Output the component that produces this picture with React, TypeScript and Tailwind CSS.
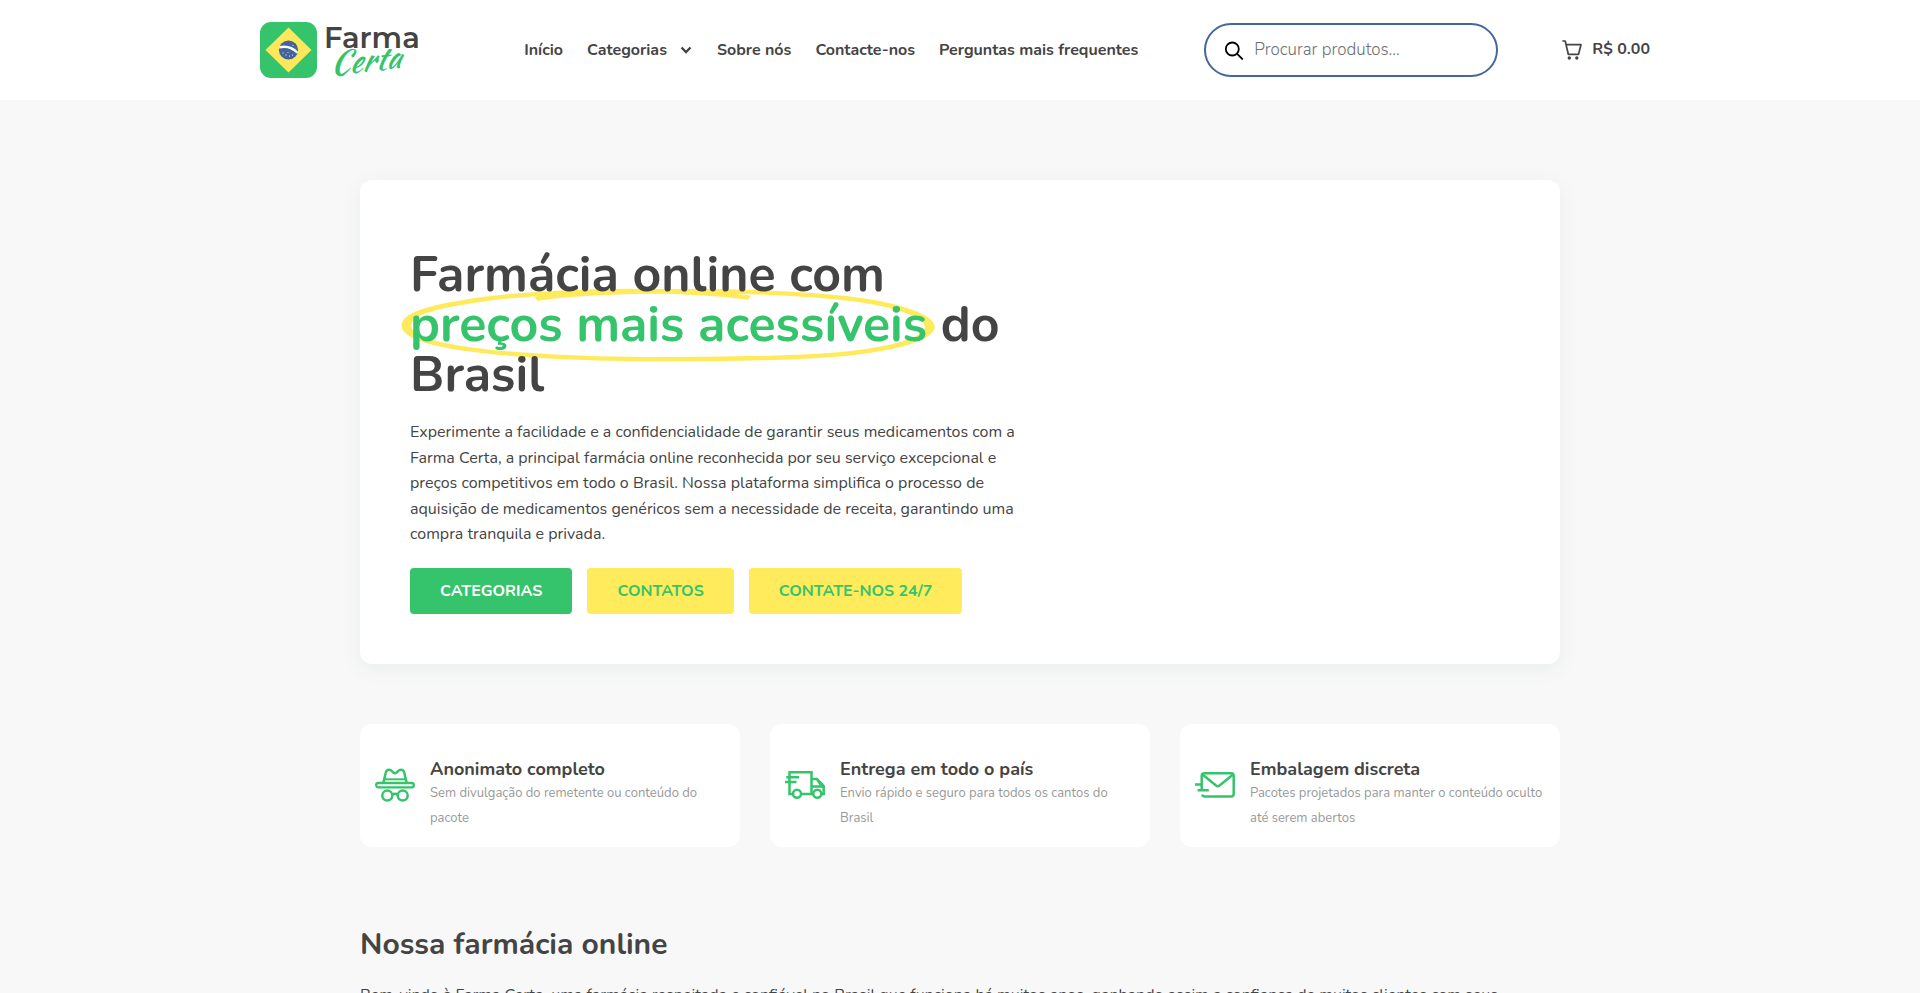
import type { ReactNode } from "react";

function Logo() {
  return (
    <svg viewBox="0 0 160 58" className="h-[58px] w-40 overflow-visible" role="img" aria-label="Farma Certa">
      <rect x="0" y="1" width="57" height="56" rx="11" fill="#35c46b" />
      <path d="M28.500 6.500 51.500 29 28.500 51.500 5.500 29Z" fill="#fde75a" />
      <circle cx="28.500" cy="29" r="9.600" fill="#42659b" />
      <path d="M19.300 26.300c6.500-1.500 13.500.6 18.300 5.400" fill="none" stroke="#fff" strokeWidth="2.300" />
      <g fill="#fff">
        <circle cx="23" cy="32" r=".6" />
        <circle cx="26" cy="34" r=".6" />
        <circle cx="29.500" cy="35" r=".6" />
        <circle cx="32.500" cy="34" r=".6" />
        <circle cx="28" cy="31.500" r=".5" />
        <circle cx="33" cy="24.500" r=".5" />
      </g>
      <text x="64" y="27" fontSize="29" fontWeight="600" fill="#444" className="font-['Montserrat','Nunito','Open_Sans',sans-serif]">
        Farma
      </text>
      <text
        x="70"
        y="54"
        fontSize="32"
        fontStyle="italic"
        fill="#35c46b"
        transform="rotate(-6 70 54)"
        className="font-['Yellowtail','Kaushan_Script','Pacifico','Dancing_Script',cursive]"
      >
        Certa
      </text>
    </svg>
  );
}

function NavLink({ children }: { children: ReactNode }) {
  return (
    <a href="#" className="flex items-center whitespace-nowrap">
      {children}
    </a>
  );
}

function Header() {
  return (
    <header className="bg-white">
      <div className="mx-auto flex h-[100px] max-w-[1400px] items-center justify-between pr-2.5">
        <a href="#">
          <Logo />
        </a>
        <div className="flex items-center gap-16">
          <nav className="flex items-center gap-6 pr-0.5 text-base font-bold">
            <NavLink>Início</NavLink>
            <NavLink>
              Categorias
              <svg viewBox="0 0 12 12" className="ml-3 h-3 w-3.5" fill="none" stroke="#444" strokeWidth="2.400">
                <path d="m1.500 3.500 4.500 4.500 4.500-4.500" />
              </svg>
            </NavLink>
            <NavLink>Sobre nós</NavLink>
            <NavLink>Contacte-nos</NavLink>
            <NavLink>Perguntas mais frequentes</NavLink>
          </nav>
          <label className="flex h-[54px] w-[294px] items-center gap-2.5 rounded-full border-2 border-[#44679f] pr-5 pl-[18px]">
            <svg viewBox="0 0 20 20" className="size-5 shrink-0" fill="none" stroke="#000" strokeWidth="1.800">
              <circle cx="8.300" cy="9" r="6.500" />
              <path d="m13.100 13.800 5.700 5.700" />
            </svg>
            <input
              type="search"
              aria-label="Procurar produtos"
              placeholder="Procurar produtos..."
              className="w-full min-w-0 bg-transparent text-[17px] font-light outline-none placeholder:text-[#707070]"
            />
          </label>
          <a href="#" className="flex items-center gap-2.5 text-base font-bold whitespace-nowrap">
            <svg viewBox="0 0 20 20" className="size-5" fill="none" stroke="#444" strokeWidth="1.700">
              <path d="M.300 1H3.200L6.300 14.300H16.500L19 4.700H4.100" strokeLinejoin="round" />
              <circle cx="7.300" cy="18" r="1.700" fill="#444" stroke="none" />
              <circle cx="14.800" cy="18" r="1.700" fill="#444" stroke="none" />
            </svg>
            <span className="pb-0.5">R$ 0.00</span>
          </a>
        </div>
      </div>
    </header>
  );
}

function Hero() {
  return (
    <section className="rounded-xl bg-white px-[50px] pt-[70px] pb-[50px] shadow-[0_4px_20px_rgba(60,110,90,0.08)]">
      <div className="max-w-[620px]">
        <h1 className="isolate text-[50px] leading-[50px] font-bold">
          Farmácia online com{" "}
          <span className="relative inline-block whitespace-nowrap text-[#35c46b]">
            preços mais acessíveis
            <svg
              viewBox="0 0 500 150"
              preserveAspectRatio="none"
              className="absolute top-1/2 left-1/2 -z-10 h-[calc(100%+22px)] w-[calc(100%+20px)] -translate-x-1/2 -translate-y-1/2 overflow-visible"
              fill="none"
              stroke="#ffea5c"
              strokeWidth="9"
            >
              <path d="M325,18C228.7-8.3,118.5,8.3,78,21C22.4,38.4,4.6,54.6,5.6,77.6c1.4,32.4,52.2,54,142.6,63.7 c66.2,7.1,212.2,7.5,273.5-8.3c64.4-16.6,104.3-57.6,33.8-98.2C386.7-4.9,179.4-1.4,126.3,20.7" />
            </svg>
          </span>{" "}
          do Brasil
        </h1>
        <p className="mt-5 text-base leading-[1.6]">
          Experimente a facilidade e a confidencialidade de garantir seus medicamentos com a Farma Certa, a principal
          farmácia online reconhecida por seu serviço excepcional e preços competitivos em todo o Brasil. Nossa
          plataforma simplifica o processo de aquisição de medicamentos genéricos sem a necessidade de receita,
          garantindo uma compra tranquila e privada.
        </p>
        <div className="mt-5 flex flex-wrap gap-[15px] text-base font-bold uppercase">
          <button className="h-[46px] rounded bg-[#35c46b] px-[30px] text-white uppercase">Categorias</button>
          <button className="h-[46px] rounded bg-[#ffeb5c] px-[30px] text-[#35c46b] uppercase">Contatos</button>
          <button className="h-[46px] rounded bg-[#ffeb5c] px-[30px] text-[#35c46b] uppercase">Contate-nos 24/7</button>
        </div>
      </div>
    </section>
  );
}

function IconFrame({ children }: { children: ReactNode }) {
  return (
    <svg viewBox="0 0 40 40" className="size-10 shrink-0" fill="none" stroke="#35c46b" strokeWidth="2.500">
      {children}
    </svg>
  );
}

const features = [
  {
    title: "Anonimato completo",
    text: "Sem divulgação do remetente ou conteúdo do pacote",
    icon: (
      <IconFrame>
        <path d="M8.300 18 10.800 7.500C11.500 4.800 13.600 4 15.800 5.200L18.300 7.500Q20 8.700 21.700 7.500L24.200 5.200C26.400 4 28.500 4.800 29.200 7.500L31.700 18" />
        <path d="M9.300 14.300H30.700" strokeWidth="2" />
        <rect x="1.200" y="18" width="37.600" height="4.300" rx="2.100" strokeWidth="2.300" />
        <circle cx="12.300" cy="30.600" r="5" />
        <circle cx="27.700" cy="30.600" r="5" />
        <path d="M17 29.600Q20 27.900 23 29.600" />
      </IconFrame>
    ),
  },
  {
    title: "Entrega em todo o país",
    text: "Envio rápido e seguro para todos os cantos do Brasil",
    icon: (
      <IconFrame>
        <path d="M4.500 12V7.300H26.500V29H16M4.500 12V29H8" />
        <path d="M1.300 12.300H14M0 17H11.500" />
        <path d="M26.500 14H32L38.700 21V29H36.500M26.500 29H28.500M26.500 21.500H38.700" />
        <path d="M31.500 14 35.500 20.500" strokeWidth="1.500" />
        <circle cx="12" cy="28.700" r="4" />
        <circle cx="32.300" cy="28.700" r="4" />
      </IconFrame>
    ),
  },
  {
    title: "Embalagem discreta",
    text: "Pacotes projetados para manter o conteúdo oculto até serem abertos",
    icon: (
      <IconFrame>
        <path d="M6.700 24.500V11Q6.700 8.200 9.500 8.200H36Q38.700 8.200 38.700 11V28.700Q38.700 31.500 36 31.500H9.500Q7.700 31.500 7.100 29.500" />
        <path d="M7.500 9.500 21 20.500Q22.800 21.900 24.600 20.500L38 9.500" />
        <path d="M0 19.400H6.500M2.600 25.200H13.800" />
      </IconFrame>
    ),
  },
];

function Features() {
  return (
    <section className="mt-[60px] grid grid-cols-3 gap-[30px]">
      {features.map((f) => (
        <article key={f.title} className="flex items-center gap-[15px] rounded-xl bg-white px-[15px] pt-[33px] pb-4">
          <div className="pb-[18px]">{f.icon}</div>
          <div>
            <h3 className="text-lg leading-6 font-bold">{f.title}</h3>
            <p className="text-[13px] leading-[25px] text-[#999]">{f.text}</p>
          </div>
        </article>
      ))}
    </section>
  );
}

export default function App() {
  return (
    <div className="min-h-screen bg-[#f8f8f8] font-['Nunito','Open_Sans',sans-serif] text-[#444]">
      <Header />
      <main className="mx-auto max-w-[1200px] pt-20">
        <Hero />
        <Features />
        <section className="mt-20">
          <h2 className="text-3xl leading-9 font-bold">Nossa farmácia online</h2>
          <p className="mt-5 text-base leading-[1.6]">
            Bem-vindo à Farma Certa, uma farmácia respeitada e confiável no Brasil que funciona há muitos anos, ganhando
            assim a confiança de muitos clientes com seus
          </p>
        </section>
      </main>
    </div>
  );
}
